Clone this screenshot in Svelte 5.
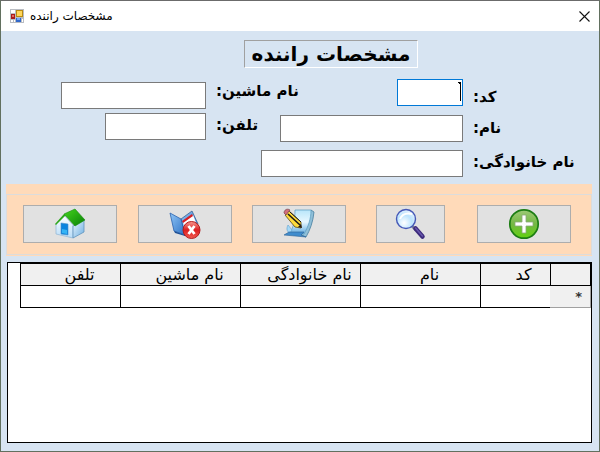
<script lang="ts">
  let driver = $state({ code: "", name: "", family: "", car: "", phone: "" });

  const columns = [
    { title: "کد", width: 70 },
    { title: "نام", width: 120 },
    { title: "نام خانوادگی", width: 120 },
    { title: "نام ماشین", width: 120 },
    { title: "تلفن", width: 100 },
  ];
</script>

<svelte:head>
  <title>مشخصات راننده</title>
</svelte:head>

<main class="window">
  <header class="titlebar">
    <svg class="app-icon" width="14" height="14" viewBox="0 0 14 14" aria-hidden="true">
      <rect width="14" height="14" fill="#b9bcc2" />
      <path d="M1 1h4v3H1zM1 11h2v2H1zM4 11h1v2H4zM12 10h1v3h-1z" fill="#fff" />
      <rect x="6" y="1" width="7" height="7" fill="#b98a12" />
      <rect x="7" y="2" width="5" height="5" fill="#ffd659" />
      <rect x="1" y="5" width="4" height="5" fill="#a91a1c" />
      <rect x="2" y="6" width="2" height="2" fill="#e66a5e" />
      <rect x="6" y="9" width="5" height="4" fill="#3168cb" />
      <rect x="7" y="9" width="3" height="2" fill="#77a8f5" />
    </svg>
    <span class="caption">مشخصات راننده</span>
    <button class="close" type="button" aria-label="بستن">
      <svg width="11" height="11" viewBox="0 0 11 11"><path d="M.5.5l10 10M10.500.5l-10 10" stroke="#111" stroke-width="1.1" /></svg>
    </button>
  </header>

  <div class="heading">
    <h1 dir="rtl">مشخصات راننده</h1>
  </div>

  <form class="fields">
    <div class="row first">
      <input class="car" id="car" dir="rtl" bind:value={driver.car} />
      <div class="middle">
        <label for="car" dir="rtl">نام ماشین:</label>
        <input class="code" id="code" dir="rtl" bind:value={driver.code} />
      </div>
      <label class="right" for="code" dir="rtl">کد:</label>
    </div>
    <div class="row second">
      <input class="phone" id="phone" dir="rtl" bind:value={driver.phone} />
      <div class="middle">
        <label for="phone" dir="rtl">تلفن:</label>
        <input class="name" id="name" dir="rtl" bind:value={driver.name} />
      </div>
      <label class="right" for="name" dir="rtl">نام:</label>
    </div>
    <div class="row third">
      <div class="middle">
        <input class="family" id="family" dir="rtl" bind:value={driver.family} />
      </div>
      <label class="right" for="family" dir="rtl">نام خانوادگی:</label>
    </div>
  </form>

  <div class="toolbar">
    <div class="group">
      <button type="button" aria-label="خانه">
        <svg width="32" height="32" viewBox="0 0 32 32">
          <defs>
            <linearGradient id="roof" x1="0" y1="0" x2="1" y2="1">
              <stop offset="0" stop-color="#45d51c" />
              <stop offset="1" stop-color="#087f08" />
            </linearGradient>
            <linearGradient id="wall" x1="0" y1="0" x2="0" y2="1">
              <stop offset="0" stop-color="#fff" />
              <stop offset="1" stop-color="#b8dcf8" />
            </linearGradient>
            <linearGradient id="side" x1="0" y1="0" x2="1" y2="1">
              <stop offset="0" stop-color="#e8f4fd" />
              <stop offset="1" stop-color="#6fb0e2" />
            </linearGradient>
          </defs>
          <path d="M2 16L10 7l9 10v13L2 26z" fill="url(#wall)" stroke="#8fb4d4" stroke-width=".7" />
          <path d="M19 18l11-6v12l-11 6z" fill="url(#side)" stroke="#5f93bd" stroke-width=".8" />
          <path d="M1 16L10 6l2 1L2 17z" fill="#2fa81c" />
          <path d="M10 6L21 1l10 11-10 6z" fill="url(#roof)" stroke="#168c0d" stroke-width=".6" />
          <path d="M7 15l7 1v11l-7-1z" fill="#0a84df" stroke="#4d8fc6" stroke-width=".6" />
          <path d="M8 21l5 1v4l-5-1z" fill="#35b4f5" />
        </svg>
      </button>
      <button type="button" aria-label="حذف">
        <svg width="32" height="32" viewBox="0 0 32 32">
          <defs>
            <linearGradient id="cover" x1="0" y1="0" x2="1" y2="1">
              <stop offset="0" stop-color="#8fc5f6" />
              <stop offset="1" stop-color="#2f72c4" />
            </linearGradient>
            <linearGradient id="cross" x1="0" y1="0" x2="0" y2="1">
              <stop offset="0" stop-color="#f79a91" />
              <stop offset=".5" stop-color="#dc1f21" />
              <stop offset="1" stop-color="#f25b50" />
            </linearGradient>
          </defs>
          <path d="M12 11l11-8 6 13-13 12z" fill="url(#cover)" stroke="#3a5f93" stroke-width=".8" />
          <path d="M14 13l10-6 4 10-12 9z" fill="#fff" />
          <path d="M13 13l10-7 1 2-10 7z" fill="#d71d23" />
          <path d="M1 5l11 6 4 16-11-4z" fill="url(#cover)" stroke="#2861ad" stroke-width=".8" />
          <path d="M5 23l11 4v1L6 25z" fill="#1d4f95" />
          <circle cx="22.500" cy="22" r="8.500" fill="url(#cross)" stroke="#b31a1d" />
          <path d="M19.500 18l6 8m0-8l-6 8" stroke="#fff" stroke-width="2.800" />
        </svg>
      </button>
      <button type="button" aria-label="ویرایش">
        <svg width="32" height="32" viewBox="0 0 32 32">
          <defs>
            <linearGradient id="page" x1="0" y1="0" x2="0" y2="1">
              <stop offset="0" stop-color="#b8e6fa" />
              <stop offset=".5" stop-color="#e8f8ff" />
              <stop offset="1" stop-color="#62abdf" />
            </linearGradient>
          </defs>
          <path d="M28 2l3 2c-1 10-4 18-8 25l-5-2z" fill="#8fbfd8" stroke="#477f9f" stroke-width=".8" />
          <path d="M12 2h16c0 9-3 17-7 24H6C11 19 12 12 12 2z" fill="url(#page)" stroke="#5899bd" stroke-width=".7" />
          <path d="M5 17c-2 4-1 7 2 8l2-3z" fill="#a6d9f7" stroke="#5d9fce" stroke-width=".6" />
          <path d="M6 24h15l-3 3 5 2-22-2z" fill="#3f8ccd" stroke="#2c6396" stroke-width=".6" />
          <path d="M6 3l12 11v6l-6-1L2 7z" fill="#ffdc3b" stroke="#5b4815" stroke-width=".8" />
          <path d="M5 6l12 11" stroke="#1c1a18" stroke-width="1.600" />
          <path d="M7 4l11 10" stroke="#1c1a18" stroke-width="1" />
          <path d="M1 5c0-3 3-5 6-3L3 7z" fill="#d26d7c" stroke="#78434c" stroke-width=".7" />
          <path d="M15 19l4 1-1-4z" fill="#251b12" />
        </svg>
      </button>
      <button class="search" type="button" aria-label="جستجو">
        <svg width="32" height="32" viewBox="0 0 32 32">
          <defs>
            <radialGradient id="lens" cx=".4" cy=".7" r=".75">
              <stop offset="0" stop-color="#fff" />
              <stop offset=".55" stop-color="#bce4fe" />
              <stop offset="1" stop-color="#eaf4ff" />
            </radialGradient>
          </defs>
          <path d="M17 18l4 4" stroke="#777e97" stroke-width="3" />
          <path d="M20.500 20.500l7 8" stroke="#3d2b7c" stroke-width="4.500" stroke-linecap="round" />
          <path d="M20.500 20l7 8" stroke="#6756ad" stroke-width="1.500" stroke-linecap="round" />
          <circle cx="11" cy="11" r="9.500" fill="url(#lens)" stroke="#4558b7" stroke-width="1.400" />
          <path d="M5 11c2-5 7-6 12-5" fill="none" stroke="#fff" stroke-width="2" />
        </svg>
      </button>
      <button type="button" aria-label="افزودن">
        <svg width="32" height="32" viewBox="0 0 32 32">
          <defs>
            <linearGradient id="disc" x1="0" y1="0" x2="0" y2="1">
              <stop offset="0" stop-color="#9dca76" />
              <stop offset=".5" stop-color="#74b844" />
              <stop offset="1" stop-color="#62d20f" />
            </linearGradient>
          </defs>
          <circle cx="16" cy="16" r="14.200" fill="url(#disc)" stroke="#1d7d14" stroke-width="1.700" />
          <path d="M14 7h4v7h7v4h-7v7h-4v-7H7v-4h7z" fill="#fff" stroke="#8aa878" stroke-width=".8" />
        </svg>
      </button>
    </div>
  </div>

  <section class="list" dir="rtl">
    <table>
      <colgroup>
        <col style="width: 40px" />
        {#each columns as column}
          <col style="width: {column.width}px" />
        {/each}
      </colgroup>
      <thead>
        <tr>
          <th aria-label="ردیف"></th>
          {#each columns as column}
            <th scope="col">{column.title}</th>
          {/each}
        </tr>
      </thead>
      <tbody>
        <tr>
          <td class="marker">*</td>
          {#each columns as column}
            <td></td>
          {/each}
        </tr>
      </tbody>
    </table>
  </section>
</main>

<style>
  :global(body) {
    background: #d7e4f2;
  }
  .window {
    box-sizing: border-box;
    min-height: 100vh;
    display: flex;
    flex-direction: column;
    border: 1px solid #62705f;
    border-top-color: #6b6b6b;
    padding-bottom: 8px;
    background: #d7e4f2;
    color: #000;
    font-family: "DejaVu Sans", "Noto Sans", sans-serif;
  }
  .titlebar {
    display: flex;
    align-items: center;
    height: 30px;
    padding: 0 9px;
    background: #fff;
  }
  .caption {
    flex: 1;
    margin-left: 6px;
    font-size: 12px;
  }
  .close {
    display: flex;
    padding: 0;
    border: 0;
    background: none;
  }
  .heading {
    display: flex;
    justify-content: center;
    padding: 9px 0 0 62px;
  }
  h1 {
    box-sizing: border-box;
    height: 28px;
    margin: 0;
    padding: 0 7px;
    border: 1px solid #a0a0a0;
    border-right-color: #fff;
    border-bottom-color: #fff;
    font-size: 20px;
    line-height: 26px;
  }
  .fields {
    padding: 11px 0 7px;
  }
  .row {
    display: grid;
    grid-template-columns: 205fr 257fr 136fr;
  }
  .row > input {
    justify-self: end;
  }
  .middle {
    display: flex;
    justify-content: space-between;
    padding-left: 10px;
  }
  .first {
    height: 30px;
    margin-bottom: 4px;
  }
  .first > input,
  .first .right {
    align-self: end;
  }
  .second {
    height: 29px;
    margin-bottom: 8px;
  }
  .second .middle input {
    align-self: end;
  }
  .second .right {
    align-self: center;
  }
  .third .middle {
    grid-column: 1 / 3;
    justify-content: flex-end;
  }
  label {
    font-size: 15px;
    font-weight: bold;
    line-height: 24px;
    white-space: nowrap;
  }
  .right {
    justify-self: start;
    margin-left: 10px;
  }
  input {
    box-sizing: border-box;
    height: 27px;
    padding: 0 2px;
    border: 1px solid #7a7a7a;
    background: #fff;
    font: 16px "DejaVu Sans", sans-serif;
    outline: none;
  }
  .car {
    width: 145px;
  }
  .phone {
    width: 101px;
  }
  /* active field, with the right-to-left caret flag */
  .code {
    width: 66px;
    border-color: #0078d7;
    background:
      linear-gradient(#000, #000) right 1px top 2px / 1px 19px no-repeat,
      linear-gradient(#000, #000) right 1px top 2px / 3px 1px no-repeat,
      linear-gradient(#000, #000) right 2px top 3px / 1px 1px no-repeat,
      #fff;
  }
  .name {
    width: 183px;
  }
  .family {
    width: 202px;
  }
  .toolbar {
    margin: 0 7px 6px 5px;
    padding: 10px 0 1px;
    background: #ffdab9;
  }
  .group {
    display: grid;
    grid-template-columns: 115fr 114fr 124fr 101fr 94fr;
    padding: 10px 20px 11px 16px;
    border: 1px solid #dcdcdc;
  }
  .group button {
    display: flex;
    align-items: center;
    justify-content: center;
    box-sizing: border-box;
    width: 94px;
    height: 38px;
    padding: 0;
    border: 1px solid #adadad;
    background: #e1e1e1;
  }
  .group .search {
    width: 69px;
  }
  .list {
    flex: 1;
    margin: 0 7px 0 6px;
    border: 1px solid #000;
    background: #fff;
  }
  table {
    width: 570px;
    table-layout: fixed;
    border-collapse: collapse;
  }
  th,
  td {
    box-sizing: border-box;
    height: 22px;
    padding: 0;
    border: 1px solid #000;
    line-height: 20px;
  }
  th {
    padding-left: 18px;
    background: #f0f0f0;
    font-size: 16px;
    font-weight: normal;
    white-space: nowrap;
  }
  th:nth-child(2) {
    padding-left: 16px;
  }
  .marker {
    padding-right: 8px;
    border-color: #a0a0a0;
    border-left-color: #f0f0f0;
    background: #f0f0f0;
    font-size: 13px;
    font-weight: bold;
    color: #333;
  }
</style>
